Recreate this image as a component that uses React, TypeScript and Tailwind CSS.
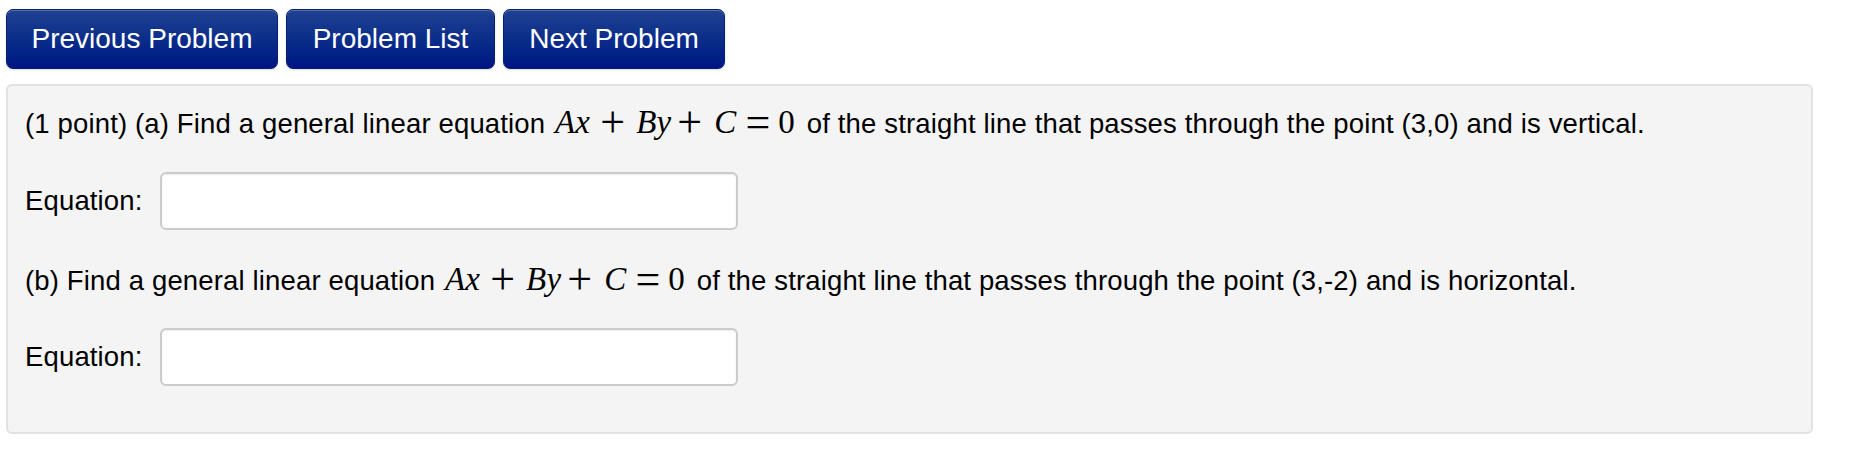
import React from "react";

const navButton =
  "h-[60px] rounded-[7px] border border-[#0a1f6e] bg-linear-to-b from-[#1f4191] to-[#001383] text-[28px] leading-none text-white shadow-[inset_0_1px_0_rgba(255,255,255,0.25),0_1px_2px_rgba(0,0,0,0.15)]";

// operators are drawn a bit larger than the letters, as the TeX font does;
// leading-[0] keeps them from pushing the line box
const op = "text-[44px] leading-[0] align-[-4px]";

function Eq() {
  return (
    <span className="ml-[2px] mr-[4px] font-['Liberation_Serif',serif] text-[33px] leading-none whitespace-nowrap">
      <i>A</i>
      <i>x</i>
      <span className={`${op} ml-[10px] mr-[11px]`}>+</span>
      <i>B</i>
      <i>y</i>
      <span className={`${op} ml-[6px] mr-[12px]`}>+</span>
      <i>C</i>
      <span className={`${op} ml-[9px] mr-[8px]`}>=</span>
      <span>0</span>
    </span>
  );
}

function AnswerRow() {
  return (
    <div className="flex h-[58px] items-center">
      <span className="w-[135px]">Equation:</span>
      <input
        type="text"
        className="h-[58px] w-[578px] rounded-[6px] border-2 border-[#cbcbcb] bg-white px-3 shadow-[inset_0_1px_2px_rgba(0,0,0,0.08)] focus:outline-none"
      />
    </div>
  );
}

export default function App() {
  return (
    <div className="min-h-screen w-[1850px] bg-white font-['Liberation_Sans',Arial,sans-serif] text-[27.5px] tracking-[0.15px] text-black">
      <div className="flex gap-[8px] pl-[6px] pt-[9px] tracking-normal">
        <button className={`${navButton} w-[272px]`}>Previous Problem</button>
        <button className={`${navButton} w-[209px]`}>Problem List</button>
        <button className={`${navButton} w-[222px]`}>Next Problem</button>
      </div>

      <div className="ml-[6px] mt-[15px] w-[1807px] rounded-[6px] border-2 border-[#e2e2e2] bg-[#f4f4f4] pl-[17px] pt-[18px] pb-[46px]">
        <p className="h-[40px] leading-[40px] whitespace-nowrap">
          (1 point) (a) Find a general linear equation <Eq /> of the straight line that passes through the point (3,0) and is vertical.
        </p>
        <div className="mt-[28px]">
          <AnswerRow />
        </div>
        <p className="mt-[31px] h-[40px] leading-[40px] whitespace-nowrap">
          (b) Find a general linear equation <Eq /> of the straight line that passes through the point (3,-2) and is horizontal.
        </p>
        <div className="mt-[27px]">
          <AnswerRow />
        </div>
      </div>
    </div>
  );
}
